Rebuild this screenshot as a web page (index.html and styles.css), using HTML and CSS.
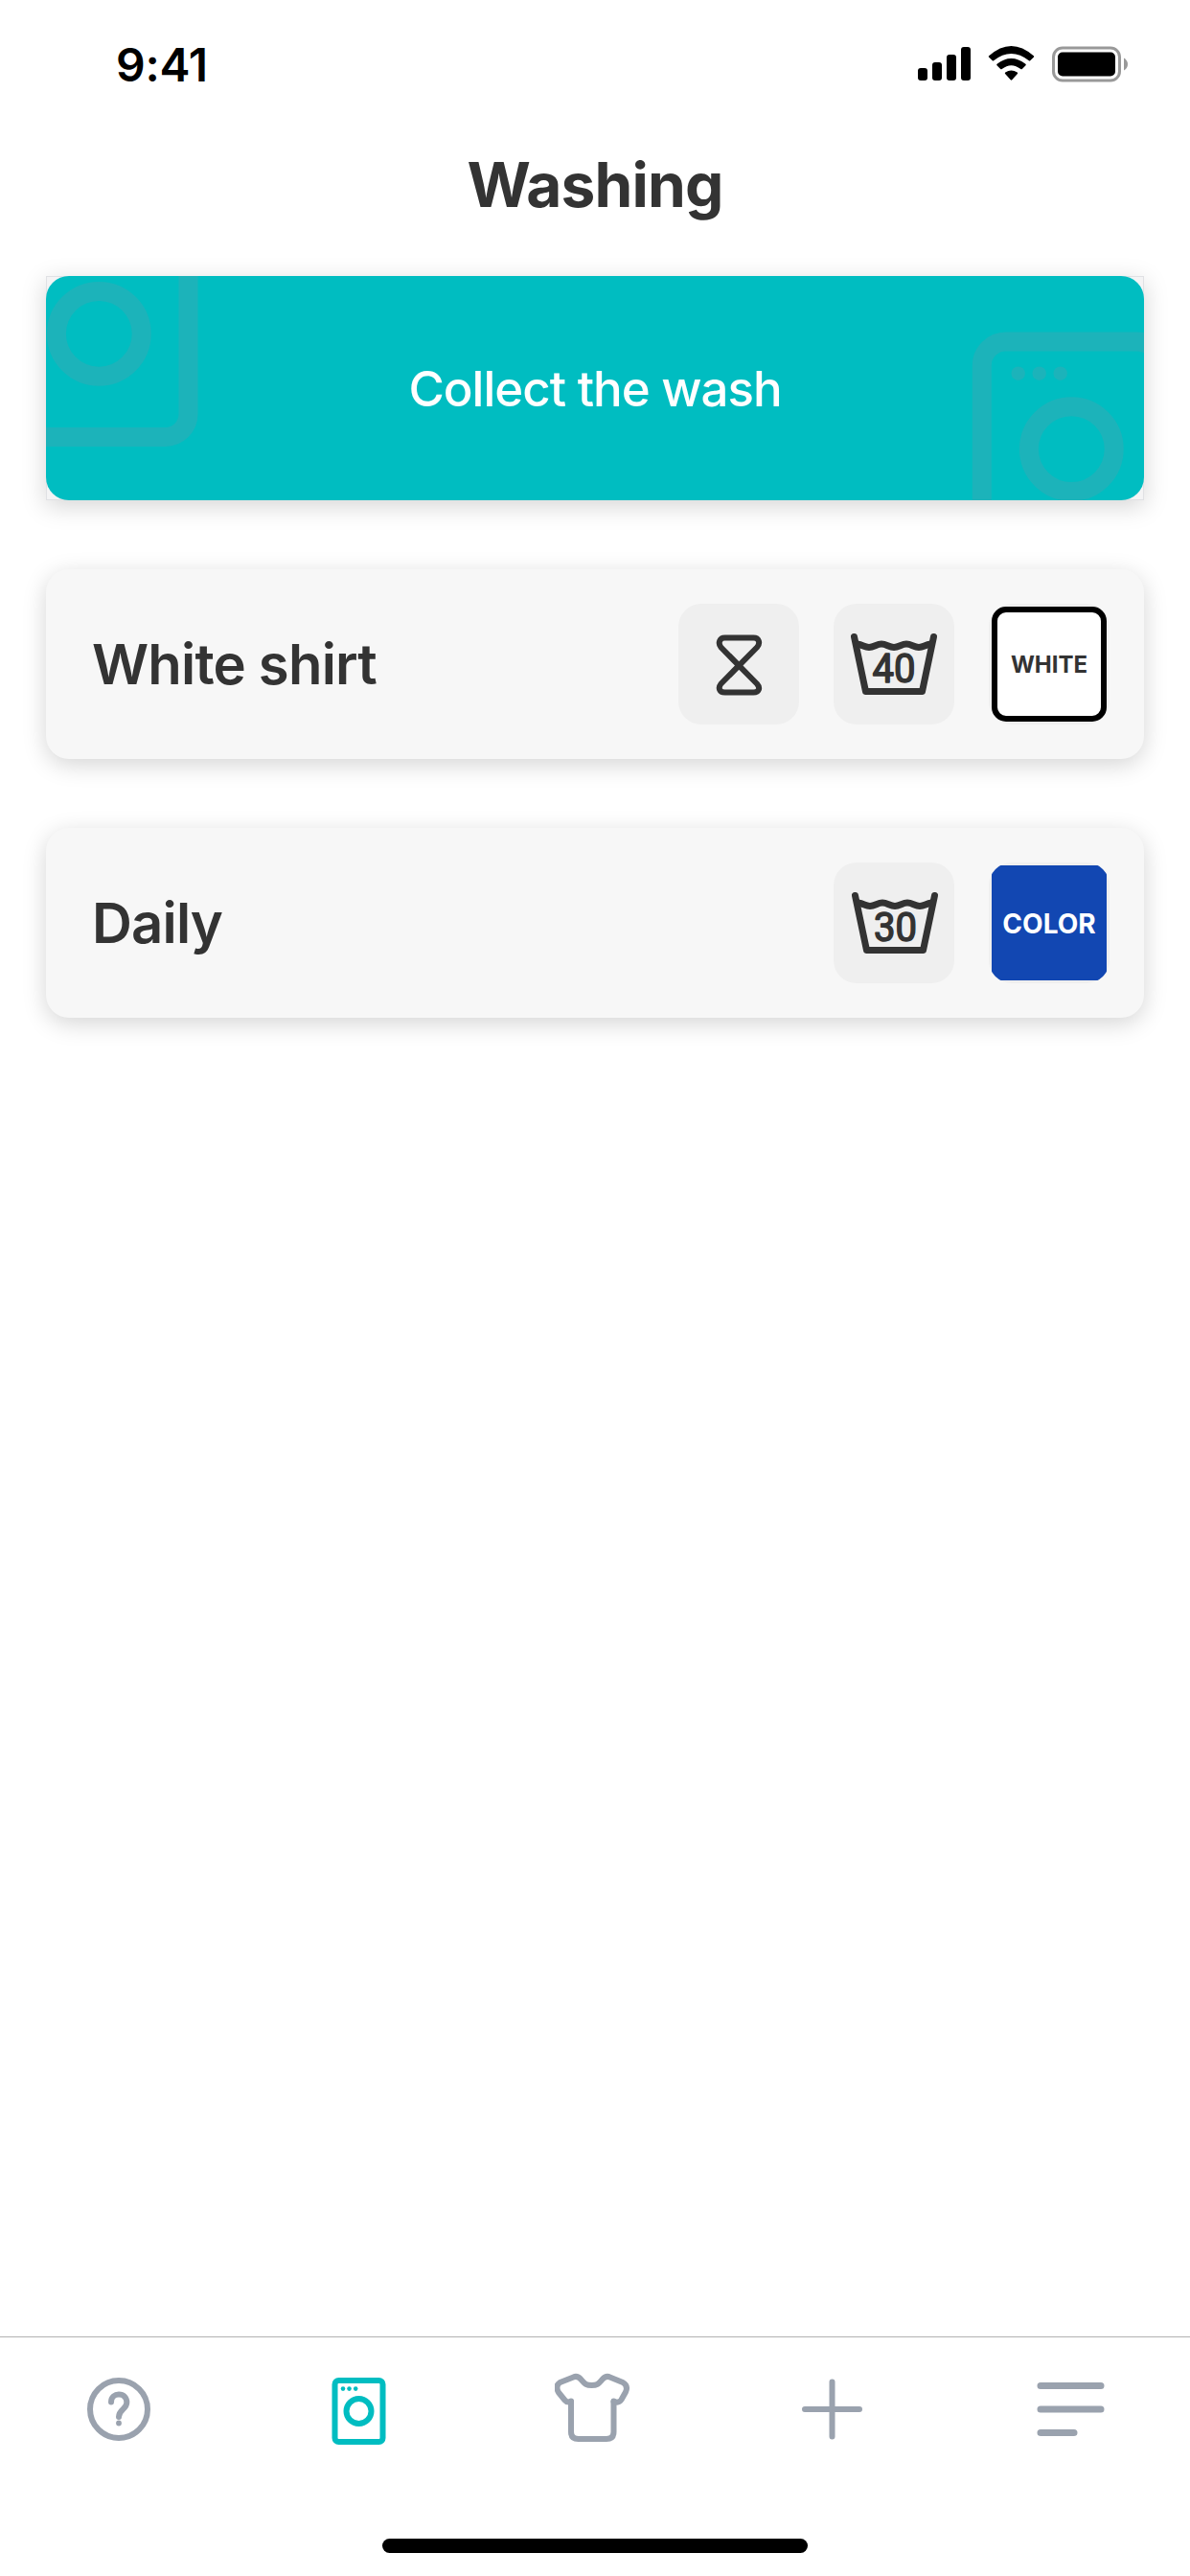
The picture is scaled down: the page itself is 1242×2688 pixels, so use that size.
FILE: index.html
```html
<!DOCTYPE html>
<html lang="en">
<head>
<meta charset="utf-8">
<title>Washing</title>
<link rel="stylesheet" href="styles.css">
</head>
<body>
<div class="screen">
  <div class="status-bar">
    <span class="clock">9:41</span>
    <svg class="status-icons" width="220" height="38" viewBox="0 0 220 38">
      <g>
        <rect x="0" y="23" width="10" height="13" rx="3"/>
        <rect x="15" y="17" width="10" height="19" rx="3"/>
        <rect x="30" y="9" width="10" height="27" rx="3"/>
        <rect x="45" y="1" width="10" height="35" rx="3"/>
      </g>
      <path d="M74.2 10.3Q97.4 -10.3 120.8 10.3Q121.6 11 120.8 11.8L117.2 15.3Q116.6 15.8 115.9 15.2Q97.4 0.6 79.1 15.2Q78.4 15.8 77.8 15.3L74.2 11.8Q73.4 11 74.2 10.3ZM82.6 18.8Q97.4 7 112.4 18.8Q113.2 19.6 112.5 20.3L108.8 24Q108 24.5 107.3 24Q97.4 16.4 87.7 24Q87 24.5 86.2 24L82.5 20.3Q81.800 19.600 82.600 18.800ZM91.3 27.500Q97.400 23.400 103.700 27.500Q104.600 28.300 103.900 29L98.300 35.300Q97.500 36 96.700 35.300L91.100 29Q90.400 28.300 91.300 27.500Z"/>
      <rect x="141.500" y="2" width="69" height="34" rx="9.500" fill="none" stroke="#999" stroke-width="3"/>
      <rect x="146" y="6.500" width="60" height="25" rx="5"/>
      <path d="M215 12.500Q219 15 219 19T215 25.500Z" fill="#999"/>
    </svg>
  </div>
  <h1 class="title">Washing</h1>
  <main class="list">
    <div class="banner-frame">
      <button class="banner">
        <svg class="banner-art" width="1146" height="234" viewBox="0 0 1146 234" fill="none" stroke="#1cb3ba" stroke-width="20">
          <rect x="-38.500" y="-52" width="187" height="220" rx="24"/>
          <circle cx="55.300" cy="60.300" r="44.400"/>
          <rect x="976.800" y="68.400" width="187" height="220" rx="25"/>
          <circle cx="1070.300" cy="180.600" r="44.400"/>
          <g fill="#1cb3ba" stroke="none">
            <circle cx="1014.700" cy="101.700" r="7.200"/>
            <circle cx="1036.700" cy="101.700" r="7.200"/>
            <circle cx="1058.700" cy="101.700" r="7.200"/>
          </g>
        </svg>
        <span class="banner-label">Collect the wash</span>
      </button>
    </div>
    <div class="card">
      <span class="card-name">White shirt</span>
      <div class="tile">
        <svg width="126" height="126" viewBox="0 0 126 126" fill="none" stroke="#333" stroke-width="6" stroke-linejoin="round">
          <path d="M48.500 35.500H78.500C84 35.500 86 41 82 45.500L44.500 83.500C41 88 43 92.500 48.500 92.500H78.500C84 92.500 86 88 82 83.500L44.500 45.500C41 41 43 35.500 48.500 35.500Z"/>
        </svg>
      </div>
      <div class="tile">
        <svg width="126" height="126" viewBox="0 0 126 126" fill="none" stroke="#333" stroke-width="7" stroke-linejoin="round" stroke-linecap="round">
          <path d="M21.500 34.500L33.500 91.500H92.500L104.500 34.500"/>
          <path d="M24.500 42C31 43 32 45.500 37 45.500C42 45.500 45 42 50 42S58 45.500 63 45.500S71 42 76 42S84 45.500 89 45.500C94 45.500 95 43 101.500 42"/>
          <text class="degrees" x="40.500" y="81.500" textLength="45" lengthAdjust="spacingAndGlyphs">40</text>
        </svg>
      </div>
      <div class="tile"><span class="swatch swatch-white">WHITE</span></div>
    </div>
    <div class="card">
      <span class="card-name">Daily</span>
      <div class="tile">
        <svg width="126" height="126" viewBox="0 0 126 126" fill="none" stroke="#333" stroke-width="7" stroke-linejoin="round" stroke-linecap="round">
          <path d="M22.500 34.500L34.500 91.500H93.500L105.500 34.500"/>
          <path d="M25.500 42C32 43 33 45.500 38 45.500C43 45.500 46 42 51 42S59 45.500 64 45.500S72 42 77 42S85 45.500 90 45.500C95 45.500 96 43 102.500 42"/>
          <text class="degrees" x="42" y="81.500" textLength="45" lengthAdjust="spacingAndGlyphs">30</text>
        </svg>
      </div>
      <div class="tile"><span class="swatch swatch-color">COLOR</span></div>
    </div>
  </main>
  <nav class="tabs">
    <svg class="tab" width="84" height="84" viewBox="0 0 84 84">
      <circle cx="42" cy="42" r="30"/>
      <path d="M34 34.500C34 29 38 26.500 42 26.500C47 26.500 50.300 30 50.300 35C50.300 42 42 42 42 50"/>
      <circle class="dot" cx="42" cy="56.500" r="2.900"/>
    </svg>
    <svg class="tab tab-active" width="84" height="84" viewBox="-1.500 0 84 84">
      <rect x="17" y="12" width="50" height="64" rx="4"/>
      <circle cx="42" cy="44" r="13"/>
      <g class="dot"><circle cx="25.500" cy="20.600" r="2.300"/><circle cx="32" cy="20.600" r="2.300"/><circle cx="38.700" cy="20.600" r="2.300"/></g>
    </svg>
    <svg class="tab" width="84" height="84" viewBox="3.500 0 84 84">
      <path d="M20.500 33.500V65.500Q20.500 73 28 73H57.500Q65 73 65 65.500V33.500"/>
      <path d="M20.500 34Q16.500 35.500 14 32.500L7.500 24.500Q3.500 17.500 9 14L23 8.500Q27 6.500 31 11C35 15.500 36 17 42 17S49 15.500 53 11Q57 6.500 61 8.500L74.500 14Q80.500 17.500 77.500 24L73 32Q70.500 36 65 34"/>
    </svg>
    <svg class="tab" width="84" height="84" viewBox="1.500 0 84 84">
      <path d="M42 13.500V70.500M13.500 42H70.500"/>
    </svg>
    <svg class="tab tab-menu" width="84" height="84" viewBox="0.500 0 84 84">
      <path d="M10.500 17.500H73.500M10.500 42H73.500M10.500 66.500H45.500"/>
    </svg>
  </nav>
  <div class="home-indicator"></div>
</div>
</body>
</html>
```

FILE: styles.css
```css
* { box-sizing: border-box; }

body {
  margin: 0;
  background: #fff;
  color: #333;
  font-family: Inter, "Liberation Sans", sans-serif;
}

.screen {
  display: flex;
  flex-direction: column;
  width: 1242px;
  height: 2688px;
}

.status-bar {
  display: flex;
  justify-content: space-between;
  align-items: flex-start;
  height: 132px;
  padding: 48px 64px 0 121px;
  color: #000;
}

.clock {
  font-size: 48px;
  font-weight: 560;
  letter-spacing: -0.2px;
  line-height: 40px;
}

.title {
  height: 156px;
  margin: 0;
  padding-top: 21px;
  font-size: 64px;
  font-weight: 700;
  letter-spacing: -0.9px;
  line-height: 80px;
  text-align: center;
}

.list {
  display: flex;
  flex-direction: column;
  gap: 72px;
  padding: 0 48px;
}

.banner-frame {
  border: 1px solid #e0e1e4;
  background: #f4f4f5;
  box-shadow: 0 6px 24px rgba(0, 0, 0, 0.17);
}

.banner {
  display: grid;
  place-items: center;
  width: 1146px;
  height: 234px;
  margin: -1px;
  padding: 0;
  border: 0;
  border-radius: 24px;
  overflow: hidden;
  background: #00bdc1;
  color: #fff;
  font: 460 51px/60px Inter, "Liberation Sans", sans-serif;
  letter-spacing: -1px;
}

.banner > * { grid-area: 1 / 1; }
.banner-label { padding-top: 2px; }

.card {
  display: flex;
  align-items: center;
  gap: 36px;
  height: 198px;
  padding: 0 36px 0 48px;
  border-radius: 24px;
  background: #f7f7f7;
  box-shadow: 0 6px 24px rgba(0, 0, 0, 0.17);
}

.card-name {
  flex: 1;
  font-size: 58px;
  font-weight: 600;
  letter-spacing: -0.8px;
  line-height: 72px;
}

.tile {
  display: flex;
  align-items: center;
  justify-content: center;
  width: 126px;
  height: 126px;
  border-radius: 24px;
  overflow: hidden;
  background: #efefef;
}

.degrees {
  font: 400 42px Roboto, sans-serif;
  fill: #333;
  stroke-width: 1.5px;
}

.swatch {
  display: flex;
  align-items: center;
  justify-content: center;
  width: 120px;
  height: 120px;
  font-weight: 700;
}

.swatch-white {
  border: 6px solid #000;
  border-radius: 15px;
  background: #fff;
  font-size: 24px;
}

.swatch-color {
  padding-top: 2px;
  background: #1247b2;
  color: #fff;
  font-size: 28px;
}

.tabs {
  display: flex;
  justify-content: space-between;
  height: 211px;
  margin-top: auto;
  padding: 33px 82px 0;
  border-top: 1px solid #b2b2b2;
}

.tab {
  fill: none;
  stroke: #9aa2ae;
  stroke-width: 6px;
  stroke-linecap: round;
  stroke-linejoin: round;
}

.tab-active { stroke: #00bdc1; }
.tab-menu { stroke-width: 7px; }
.tab .dot { fill: #9aa2ae; stroke: none; }
.tab-active .dot { fill: #00bdc1; }

.home-indicator {
  width: 444px;
  height: 15px;
  margin: 0 auto 24px;
  border-radius: 8px;
  background: #000;
}
```
